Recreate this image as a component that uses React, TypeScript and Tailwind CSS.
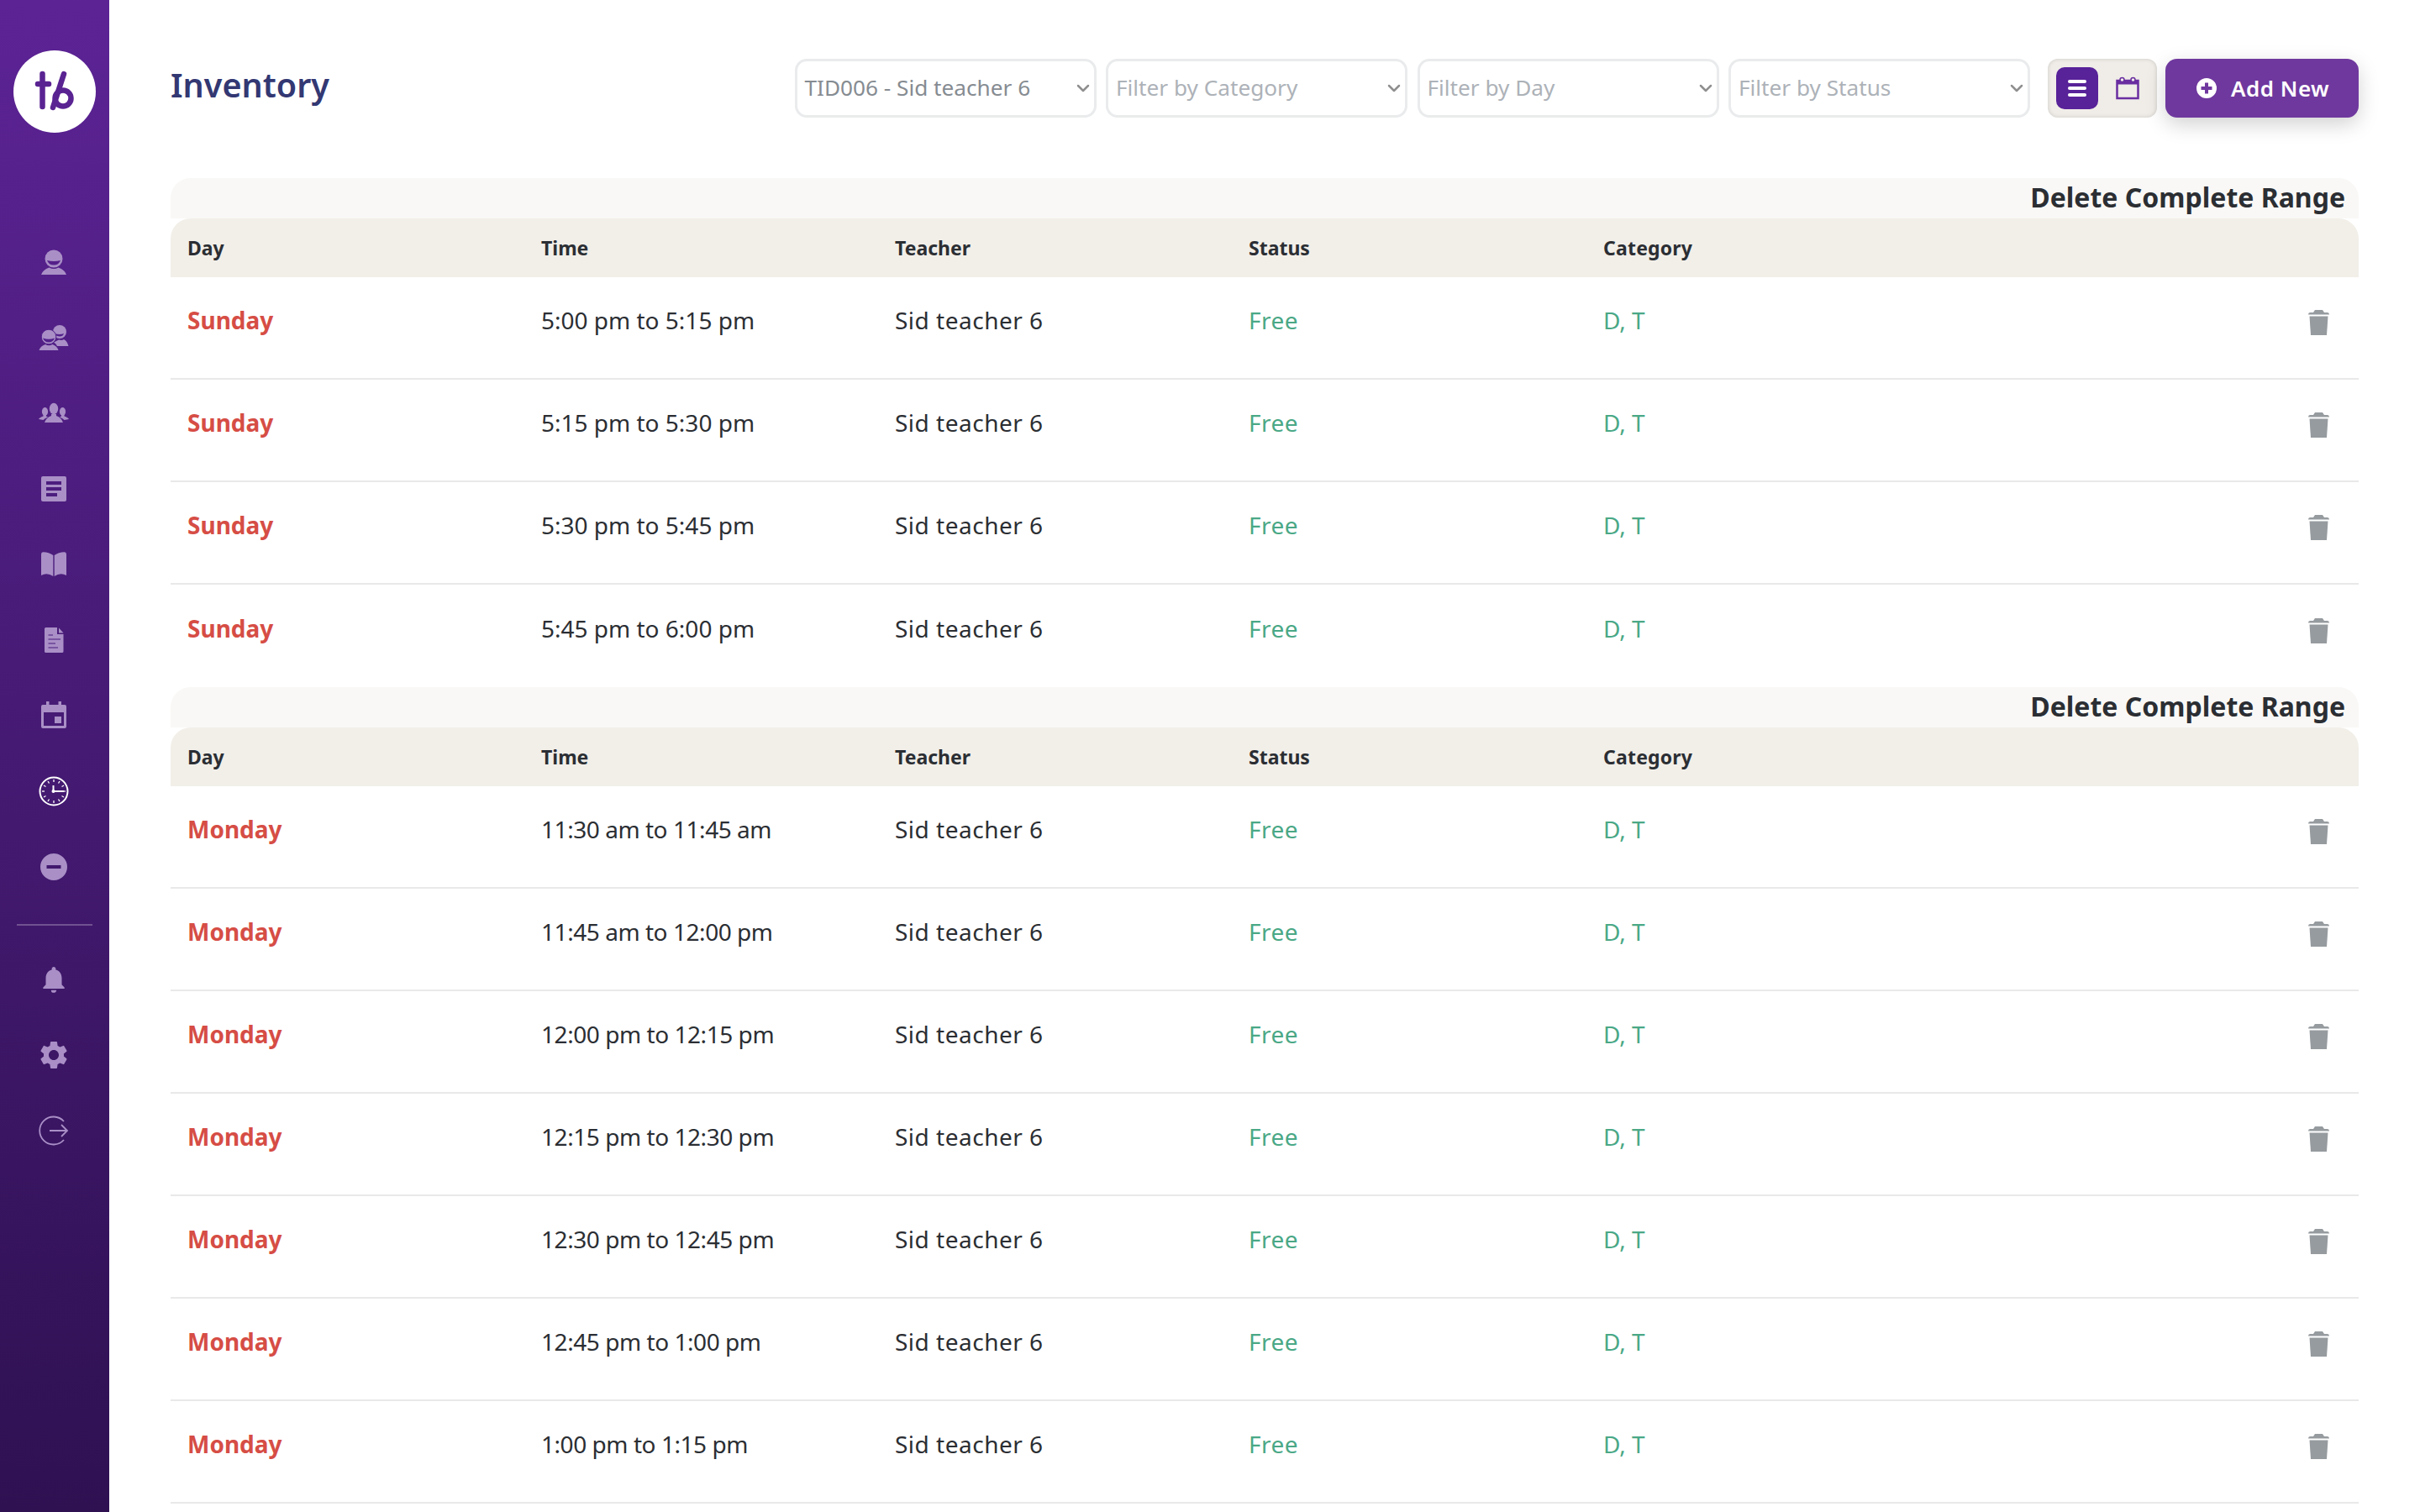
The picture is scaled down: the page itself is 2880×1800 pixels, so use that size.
import { ChevronDown } from "lucide-react"
import { MdNotifications, MdSettings } from "react-icons/md"

const UserIcon = () => (
  <svg viewBox="0 0 36 36" className="h-9 w-9" fill="currentColor">
    <circle cx="18" cy="14" r="10.5" />
    <path d="M10 16 Q18 18 26 16 Q24 21.5 18 21.5 Q12 21.5 10 16Z" fill="#55208a" />
    <path d="M3 33 Q5 27 12.5 24.5 Q18 27.5 23.5 24.5 Q31 27 33 33Z" />
  </svg>
)

const UsersIcon = () => (
  <svg viewBox="0 0 36 36" className="h-9 w-9" fill="currentColor">
    <circle cx="25" cy="11" r="8" />
    <path d="M19 13 Q25 15 30 13 Q29 16.5 25 16.5 Q21 16.5 19 13Z" fill="#52208a" />
    <path d="M24 20.5 Q28 21.5 30 20 Q34 22 35.5 28 H22 Q21 25 18 23.5Z" />
    <circle cx="12" cy="17" r="8.8" fill="currentColor" stroke="#52208a" strokeWidth="1" />
    <path d="M5 18.5 Q12 21 19 18.5 Q17 23.5 12 23.5 Q7 23.5 5 18.5Z" fill="#52208a" />
    <path d="M0.5 33 Q2 28 8 26 Q12 28.5 16.5 26 Q22 28 23.5 33Z" />
  </svg>
)

const GroupIcon = () => (
  <svg viewBox="0 0 36 36" className="h-9 w-9" fill="currentColor">
    <ellipse cx="18" cy="12.5" rx="5.2" ry="6.8" />
    <path d="M15 19 H21 V21 Q27 23 29 29 H7 Q9 23 15 21Z" />
    <ellipse cx="7.5" cy="16" rx="3.6" ry="5" />
    <path d="M0 25 Q1 23 5.5 21.5 V20 H9 V21.5 L11 22.5 Q7 24 5.5 26Z" />
    <ellipse cx="28.5" cy="16" rx="3.6" ry="5" />
    <path d="M36 25 Q35 23 30.5 21.5 V20 H27 V21.5 L25 22.5 Q29 24 30.5 26Z" />
  </svg>
)

const NoteIcon = () => (
  <svg viewBox="0 0 36 36" className="h-9 w-9" fill="currentColor">
    <path
      fillRule="evenodd"
      d="M5 3 H31 Q33 3 33 5 V31 Q33 33 31 33 H5 Q3 33 3 31 V5 Q3 3 5 3Z M9 9 V13 H27 V9Z M9 16 V20 H27 V16Z M9 23 V27 H22 V23Z"
    />
  </svg>
)

const BookIcon = () => (
  <svg viewBox="0 0 36 36" className="h-9 w-9" fill="currentColor">
    <path d="M17.3 7 Q12 3 5 3.2 Q3 3.4 3 6 V31 Q10 27 17.3 32Z" />
    <path d="M18.7 7 Q24 3 31 3.2 Q33 3.4 33 6 V31 Q26 27 18.7 32Z" />
  </svg>
)

const DocIcon = () => (
  <svg viewBox="0 0 36 36" className="h-9 w-9" fill="currentColor">
    <path d="M8.5 3 H22 V11 H29.5 V31.5 Q29.5 33 28 33 H8.5 Q7 33 7 31.5 V4.5 Q7 3 8.5 3Z" />
    <path d="M24 3.5 L29.5 9.5 H24Z" />
    <g stroke="#481b7d" strokeWidth="1">
      <path d="M11.500 12 H17" />
      <path d="M11.500 17 H26" />
      <path d="M11.500 22 H20" />
      <path d="M11.500 27 H23" />
    </g>
  </svg>
)

const CalendarIcon = () => (
  <svg viewBox="0 0 36 36" className="h-9 w-9" fill="currentColor">
    <path
      fillRule="evenodd"
      d="M9 1 H12.500 V5 H23.500 V1 H27 V5 H31 Q33 5 33 7 V31 Q33 33 31 33 H5 Q3 33 3 31 V7 Q3 5 5 5 H9Z M6 14 V30 H30 V14Z"
    />
    <rect x="19" y="19" width="8" height="8" />
  </svg>
)

const ClockIcon = () => (
  <svg viewBox="0 0 36 36" className="h-9 w-9" fill="none" stroke="white">
    <circle cx="18" cy="18" r="16.500" strokeWidth="2" />
    <g strokeWidth="1.300">
      <path d="M18 4 V7" />
      <path d="M18 29 V32" />
      <path d="M4 18 H7" />
      <path d="M29 18 H32" />
      <path d="M11 6 L12.500 8.500" />
      <path d="M25 6 L23.500 8.500" />
      <path d="M6 11 L8.500 12.500" />
      <path d="M30 11 L27.500 12.500" />
      <path d="M11 30 L12.500 27.500" />
      <path d="M25 30 L23.500 27.500" />
      <path d="M6 25 L8.500 23.500" />
      <path d="M30 25 L27.500 23.500" />
    </g>
    <path d="M17.500 11 V18 H30" strokeWidth="2" />
    <circle cx="17.500" cy="18" r="2" fill="white" stroke="none" />
  </svg>
)

const MinusIcon = () => (
  <svg viewBox="0 0 36 36" className="h-9 w-9" fill="currentColor">
    <path
      fillRule="evenodd"
      d="M18 2 A16 16 0 1 1 18 34 A16 16 0 1 1 18 2Z M9.500 16 V20 H26.500 V16Z"
    />
  </svg>
)

const LogoutIcon = () => (
  <svg viewBox="0 0 36 36" className="h-9 w-9" fill="none" stroke="currentColor" strokeWidth="1.800">
    <path d="M30 7 A16.500 16.500 0 1 0 30 29" />
    <path d="M13 18 H34 M27 11 L34 18 L27 25" />
  </svg>
)

const TrashIcon = () => (
  <svg viewBox="0 0 25 30" className="mt-[5px] h-[30px] w-[25px]" fill="#969b9f">
    <path d="M8 0 H17 L19 3 H23 Q25 3 25 5.500 H0 Q0 3 2 3 H6Z" />
    <path d="M1.500 7.500 H23.500 L22 30 H3Z" />
  </svg>
)

const navTop = [UserIcon, UsersIcon, GroupIcon, NoteIcon, BookIcon, DocIcon, CalendarIcon, ClockIcon, MinusIcon]
const navBottom = [
  () => <MdNotifications className="h-[38px] w-[38px]" />,
  () => <MdSettings className="h-[40px] w-[40px]" />,
  LogoutIcon,
]

const filters = [
  { label: "TID006 - Sid teacher 6", selected: true },
  { label: "Filter by Category", selected: false },
  { label: "Filter by Day", selected: false },
  { label: "Filter by Status", selected: false },
]

const sunday = ["5:00 pm to 5:15 pm", "5:15 pm to 5:30 pm", "5:30 pm to 5:45 pm", "5:45 pm to 6:00 pm"]
const monday = [
  "11:30 am to 11:45 am",
  "11:45 am to 12:00 pm",
  "12:00 pm to 12:15 pm",
  "12:15 pm to 12:30 pm",
  "12:30 pm to 12:45 pm",
  "12:45 pm to 1:00 pm",
  "1:00 pm to 1:15 pm",
]

function Sidebar() {
  return (
    <aside className="flex w-[130px] shrink-0 flex-col items-center bg-gradient-to-b from-[#5c2395] to-[#2f1152] text-[#a98fc6]">
      <div className="mt-[60px] flex h-[98px] w-[98px] items-center justify-center rounded-full bg-white">
        <svg viewBox="0 0 98 98" className="h-[98px] w-[98px]" fill="none" stroke="#5a2392" strokeWidth="6.500" strokeLinecap="round">
          <path d="M34.500 28 V67" />
          <path d="M29 40 H42" />
          <path d="M60 28 L47 68" />
          <circle cx="59" cy="57" r="9.500" />
        </svg>
      </div>
      <nav className="mt-[136px] flex flex-col items-center gap-[54px] pr-[2px]">
        {navTop.map((Icon, i) => (
          <div key={i} className="flex h-9 w-9 items-center justify-center">
            <Icon />
          </div>
        ))}
      </nav>
      <div className="mb-[44px] mt-[50px] h-[2px] w-[90px] bg-white/25" />
      <nav className="flex flex-col items-center gap-[50px] pr-[2px]">
        {navBottom.map((Icon, i) => (
          <div key={i} className="flex h-10 w-10 items-center justify-center">
            <Icon />
          </div>
        ))}
      </nav>
    </aside>
  )
}

function Header() {
  return (
    <header className="mt-[70px] flex h-[70px] items-center justify-between">
      <h1 className="pb-[6px] text-[39.500px] font-semibold text-[#333873]">Inventory</h1>
      <div className="flex items-center">
        <div className="flex gap-[11.500px]">
          {filters.map((f) => (
            <div
              key={f.label}
              className={`flex h-[70px] w-[359px] items-center justify-between rounded-[14px] border-[3px] border-[#e9ebec] pl-[9px] pr-[1px] text-[26.200px] ${
                f.selected ? "text-[#868c92]" : "text-[#adb2b8]"
              }`}
            >
              <span>{f.label}</span>
              <ChevronDown className="h-[24px] w-[24px] text-[#8f8f8f]" strokeWidth={2.5} />
            </div>
          ))}
        </div>
        <div className="ml-[21px] flex h-[70px] w-[130px] items-center gap-[10px] rounded-[12px] bg-[#f0ede8] pl-[10px] shadow-[inset_0_0_5px_rgba(0,0,0,0.15)]">
          <div className="flex h-[50px] w-[50px] flex-col items-center justify-center gap-[4px] rounded-[10px] bg-[#582299]">
            <span className="h-[4px] w-[22px] rounded-full bg-white" />
            <span className="h-[4px] w-[22px] rounded-full bg-white" />
            <span className="h-[4px] w-[22px] rounded-full bg-white" />
          </div>
          <svg viewBox="0 0 28 28" className="ml-[11px] h-[28px] w-[28px]" fill="none" stroke="#6a2ea0">
            <path d="M1.500 5 H26.500 V26 H1.500Z" strokeWidth="2.500" />
            <path d="M1.500 7.500 H26.500" strokeWidth="4" />
            <circle cx="7.500" cy="4" r="2.500" fill="#f0ede8" strokeWidth="1.500" />
            <circle cx="20.500" cy="4" r="2.500" fill="#f0ede8" strokeWidth="1.500" />
          </svg>
        </div>
        <button className="ml-[10px] flex h-[70px] w-[230px] items-center gap-[17px] rounded-[14px] bg-[#6f389e] pl-[37px] text-[26px] font-semibold tracking-[0.500px] text-white shadow-[0_8px_24px_rgba(0,0,0,0.18)]">
          <svg viewBox="0 0 24 24" className="h-[24px] w-[24px]">
            <path
              fill="white"
              fillRule="evenodd"
              d="M12 0 A12 12 0 1 1 12 24 A12 12 0 1 1 12 0Z M10 5.500 V10 H5.500 V14 H10 V18.500 H14 V14 H18.500 V10 H14 V5.500Z"
            />
          </svg>
          Add New
        </button>
      </div>
    </header>
  )
}

function RangeTable({ day, times, lastBorder }: { day: string; times: string[]; lastBorder?: boolean }) {
  return (
    <section>
      <div className="flex h-[48px] items-center justify-end rounded-t-[24px] bg-[#f9f8f6] pb-[2px] pr-[16px] text-[32px] font-bold text-[#2b2e33]">
        Delete Complete Range
      </div>
      <div className="grid h-[70px] grid-cols-[421px_421px_421px_422px_1fr] items-center rounded-t-[24px] bg-[#f2efe9] px-[20px] text-[23px] font-bold text-[#2b2e33]">
        <div>Day</div>
        <div>Time</div>
        <div>Teacher</div>
        <div>Status</div>
        <div className="tracking-[0.200px]">Category</div>
      </div>
      {times.map((time, i) => (
        <div
          key={time}
          className={`grid h-[122px] grid-cols-[421px_421px_421px_422px_1fr_auto] items-center pb-[18px] pl-[20px] pr-[35px] text-[28px] text-[#2b2e33] ${
            i < times.length - 1 || lastBorder ? "border-b-2 border-[#e9e9e9]" : ""
          }`}
        >
          <div className="font-bold text-[#d64d45]">{day}</div>
          <div className={day === "Monday" ? "tracking-[-0.450px]" : ""}>{time}</div>
          <div className="tracking-[0.500px]">Sid teacher 6</div>
          <div className="tracking-[0.500px] text-[#4aa886]">Free</div>
          <div className="text-[#4aa886]">D, T</div>
          <TrashIcon />
        </div>
      ))}
    </section>
  )
}

export default function App() {
  return (
    <div className="flex h-screen overflow-hidden bg-white font-['Noto_Sans',sans-serif]">
      <Sidebar />
      <main className="min-w-0 flex-1 pl-[73px] pr-[73px]">
        <Header />
        <div className="mt-[72px]">
          <RangeTable day="Sunday" times={sunday} />
          <RangeTable day="Monday" times={monday} lastBorder />
        </div>
      </main>
    </div>
  )
}
